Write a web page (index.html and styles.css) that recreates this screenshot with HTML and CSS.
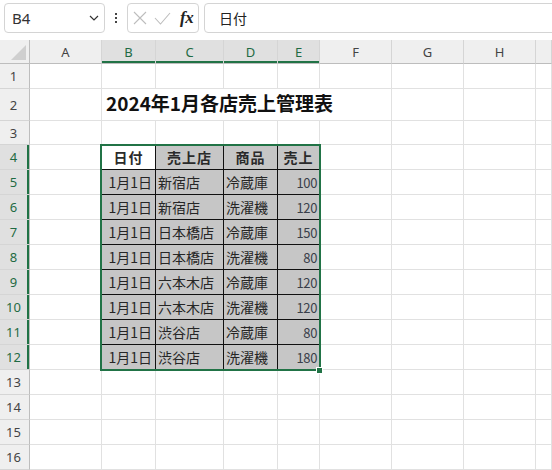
FILE: index.html
```html
<!DOCTYPE html>
<html lang="ja">
<head>
<meta charset="utf-8">
<title>2024年1月各店売上管理表</title>
<link rel="stylesheet" href="styles.css">
</head>
<body>
<div class="app">
  <div class="toolbar">
    <div class="namebox">
      <span class="nb-text">B4</span>
      <svg class="chev" width="10" height="6" viewBox="0 0 10 6"><path d="M1 1 L5 5 L9 1" fill="none" stroke="#333" stroke-width="1.2"/></svg>
    </div>
    <div class="dots"><i></i><i></i><i></i></div>
    <div class="fxgroup">
      <svg width="14" height="14" viewBox="0 0 14 14"><path d="M1 1 L13 13 M13 1 L1 13" stroke="#bdbdbd" stroke-width="1.1" fill="none"/></svg>
      <svg width="17" height="13" viewBox="0 0 17 13"><path d="M1 6 L6.5 12 L16 1" stroke="#bdbdbd" stroke-width="1.1" fill="none"/></svg>
      <span class="fx">fx</span>
    </div>
    <div class="formula">日付</div>
  </div>

  <div class="sheet">
    <!-- column headers -->
    <div class="corner"><svg width="29" height="23" viewBox="0 0 29 23"><polygon points="11,20 26,20 26,5" fill="#cfcfcf"/></svg></div>
    <div class="ch">A</div><div class="ch sel">B</div><div class="ch sel">C</div><div class="ch sel">D</div><div class="ch sel">E</div><div class="ch">F</div><div class="ch">G</div><div class="ch">H</div><div class="ch"></div>

    <!-- row 1 -->
    <div class="rh">1</div><div class="c"></div><div class="c"></div><div class="c"></div><div class="c"></div><div class="c"></div><div class="c"></div><div class="c"></div><div class="c"></div><div class="c"></div>
    <!-- row 2 -->
    <div class="rh">2</div><div class="c"></div><div class="c title">2024年1月各店売上管理表</div><div class="c"></div><div class="c"></div><div class="c"></div>
    <!-- row 3 -->
    <div class="rh">3</div><div class="c"></div><div class="c bb"></div><div class="c bb"></div><div class="c bb"></div><div class="c bb"></div><div class="c"></div><div class="c"></div><div class="c"></div><div class="c"></div>
    <!-- row 4 -->
    <div class="rh sel">4</div><div class="c lb"></div><div class="t act hd">日付</div><div class="t hd">売上店</div><div class="t hd">商品</div><div class="t hd">売上</div><div class="c"></div><div class="c"></div><div class="c"></div><div class="c"></div>
    <!-- row 5 -->
    <div class="rh sel">5</div><div class="c lb"></div><div class="t r">1月1日</div><div class="t">新宿店</div><div class="t">冷蔵庫</div><div class="t r num">100</div><div class="c"></div><div class="c"></div><div class="c"></div><div class="c"></div>
    <!-- row 6 -->
    <div class="rh sel">6</div><div class="c lb"></div><div class="t r">1月1日</div><div class="t">新宿店</div><div class="t">洗濯機</div><div class="t r num">120</div><div class="c"></div><div class="c"></div><div class="c"></div><div class="c"></div>
    <!-- row 7 -->
    <div class="rh sel">7</div><div class="c lb"></div><div class="t r">1月1日</div><div class="t">日本橋店</div><div class="t">冷蔵庫</div><div class="t r num">150</div><div class="c"></div><div class="c"></div><div class="c"></div><div class="c"></div>
    <!-- row 8 -->
    <div class="rh sel">8</div><div class="c lb"></div><div class="t r">1月1日</div><div class="t">日本橋店</div><div class="t">洗濯機</div><div class="t r num">80</div><div class="c"></div><div class="c"></div><div class="c"></div><div class="c"></div>
    <!-- row 9 -->
    <div class="rh sel">9</div><div class="c lb"></div><div class="t r">1月1日</div><div class="t">六本木店</div><div class="t">冷蔵庫</div><div class="t r num">120</div><div class="c"></div><div class="c"></div><div class="c"></div><div class="c"></div>
    <!-- row 10 -->
    <div class="rh sel">10</div><div class="c lb"></div><div class="t r">1月1日</div><div class="t">六本木店</div><div class="t">洗濯機</div><div class="t r num">120</div><div class="c"></div><div class="c"></div><div class="c"></div><div class="c"></div>
    <!-- row 11 -->
    <div class="rh sel">11</div><div class="c lb"></div><div class="t r">1月1日</div><div class="t">渋谷店</div><div class="t">冷蔵庫</div><div class="t r num">80</div><div class="c"></div><div class="c"></div><div class="c"></div><div class="c"></div>
    <!-- row 12 -->
    <div class="rh sel">12</div><div class="c lb"></div><div class="t r">1月1日</div><div class="t">渋谷店</div><div class="t">洗濯機</div><div class="t r num">180</div><div class="c"></div><div class="c"></div><div class="c"></div><div class="c"></div>
    <!-- row 13 -->
    <div class="rh">13</div><div class="c"></div><div class="c"></div><div class="c"></div><div class="c"></div><div class="c"></div><div class="c"></div><div class="c"></div><div class="c"></div><div class="c"></div>
    <!-- row 14 -->
    <div class="rh">14</div><div class="c"></div><div class="c"></div><div class="c"></div><div class="c"></div><div class="c"></div><div class="c"></div><div class="c"></div><div class="c"></div><div class="c"></div>
    <!-- row 15 -->
    <div class="rh">15</div><div class="c"></div><div class="c"></div><div class="c"></div><div class="c"></div><div class="c"></div><div class="c"></div><div class="c"></div><div class="c"></div><div class="c"></div>
    <!-- row 16 -->
    <div class="rh">16</div><div class="c"></div><div class="c"></div><div class="c"></div><div class="c"></div><div class="c"></div><div class="c"></div><div class="c"></div><div class="c"></div><div class="c"></div>

    <div class="selection"></div>
    <div class="handle"></div>
  </div>
</div>
</body>
</html>
```

FILE: styles.css
```css
html, body {
  margin: 0;
  padding: 0;
  background: #ffffff;
}
.app {
  width: 552px;
  height: 470px;
  overflow: hidden;
  font-family: "Noto Sans", "Open Sans", sans-serif;
}

/* ---------- formula bar ---------- */
.toolbar {
  height: 40px;
  box-sizing: border-box;
  padding: 3px 0 0 4px;
  display: flex;
  align-items: flex-start;
  background: #ffffff;
}
.namebox {
  width: 101px;
  height: 30px;
  box-sizing: border-box;
  border: 1px solid #d4d4d4;
  border-radius: 4px;
  display: flex;
  align-items: center;
  justify-content: space-between;
  padding: 0 5px 0 7px;
}
.nb-text {
  font-size: 15px;
  color: #333;
}
.dots {
  width: 22px;
  height: 30px;
  display: flex;
  flex-direction: column;
  align-items: center;
  justify-content: center;
  gap: 2px;
}
.dots i {
  display: block;
  width: 2px;
  height: 2px;
  background: #444;
}
.fxgroup {
  width: 72px;
  height: 30px;
  box-sizing: border-box;
  border: 1px solid #d4d4d4;
  border-radius: 4px;
  display: flex;
  align-items: center;
  padding: 0 0 0 5px;
  gap: 7px;
}
.fx {
  font-family: "Liberation Serif", serif;
  font-style: italic;
  font-weight: bold;
  font-size: 17px;
  color: #222;
  margin-left: 2px;
  letter-spacing: -0.5px;
}
.formula {
  flex: 1;
  height: 30px;
  margin-left: 5px;
  margin-right: -6px;
  box-sizing: border-box;
  border: 1px solid #d4d4d4;
  border-radius: 4px;
  display: flex;
  align-items: center;
  padding-left: 14px;
  font-family: "Noto Sans CJK JP", sans-serif;
  font-size: 14px;
  color: #222;
}

/* ---------- sheet grid ---------- */
.sheet {
  position: relative;
  display: grid;
  grid-template-columns: 30px 72px 54px 68px 54px 42px 72px 72px 72px 16px;
  grid-template-rows: 24px 25px 32px 24px repeat(13, 25px);
}
.corner {
  background: #efefef;
  border-right: 1px solid #bdbdbd;
  border-bottom: 1px solid #bdbdbd;
  box-sizing: border-box;
}
.corner svg { display: block; }
.ch {
  background: #efefef;
  box-sizing: border-box;
  border-right: 1px solid #d5d5d5;
  border-bottom: 1px solid #bdbdbd;
  display: flex;
  align-items: center;
  justify-content: center;
  font-size: 13px;
  color: #444;
}
.ch.sel {
  background: #e0e0e0;
  color: #1f6b43;
  box-shadow: inset 0 -2px 0 #217346;
}
.rh {
  background: #efefef;
  box-sizing: border-box;
  border-right: 1px solid #bdbdbd;
  border-bottom: 1px solid #d5d5d5;
  display: flex;
  align-items: center;
  justify-content: center;
  padding-right: 2px;
  font-size: 13px;
  color: #444;
}
.rh.sel {
  background: #e0e0e0;
  color: #1f6b43;
  box-shadow: inset -2px 0 0 #217346;
}
.c {
  box-sizing: border-box;
  border-right: 1px solid #e1e1e1;
  border-bottom: 1px solid #e1e1e1;
}
.c.lb { border-right-color: #000; }
.c.bb { border-bottom-color: #000; }
.title {
  grid-column: span 5;
  display: flex;
  align-items: flex-end;
  padding: 0 0 5px 4px;
  font-family: "Noto Sans CJK JP", sans-serif;
  font-weight: bold;
  font-size: 19px;
  line-height: 1.2;
  color: #111;
  white-space: nowrap;
}
.t {
  box-sizing: border-box;
  background: #c6c6c6;
  border-right: 1px solid #111;
  border-bottom: 1px solid #111;
  display: flex;
  align-items: flex-end;
  padding: 0 2px 3px 2px;
  font-family: "Noto Sans CJK JP", sans-serif;
  font-size: 14px;
  line-height: 1.2;
  color: #262626;
  white-space: nowrap;
}
.t.act { background: #ffffff; }
.t.hd {
  justify-content: center;
  font-weight: bold;
  letter-spacing: 1px;
  color: #2a2a2a;
}
.t.r {
  justify-content: flex-end;
  padding-right: 3px;
}
.t.num {
  font-size: 13px;
  letter-spacing: -0.4px;
  color: #3a3f4a;
  padding-right: 2px;
}
.selection {
  position: absolute;
  left: 100px;
  top: 104px;
  width: 221px;
  height: 227px;
  box-sizing: border-box;
  border: 2px solid #217346;
  pointer-events: none;
}
.handle {
  position: absolute;
  left: 316px;
  top: 327px;
  width: 5px;
  height: 5px;
  background: #217346;
  border: 1px solid #ffffff;
}
```
